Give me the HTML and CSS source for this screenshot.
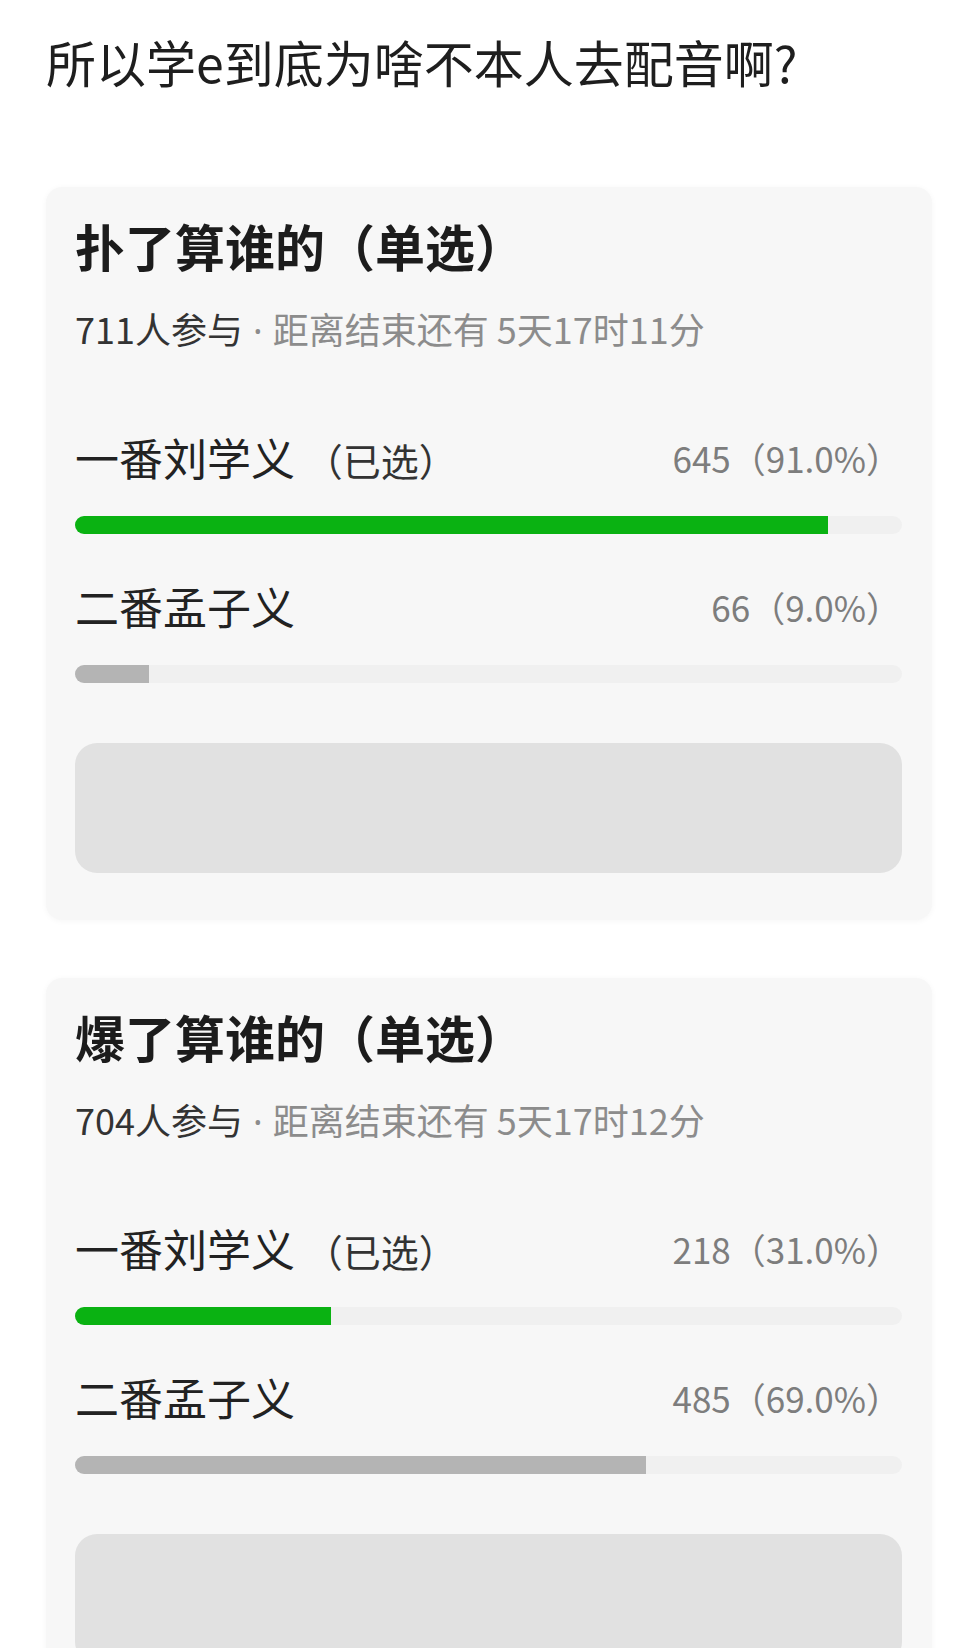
FILE: index.html
```html
<!DOCTYPE html>
<html lang="zh-CN">
<head>
  <meta charset="UTF-8">
  <meta name="viewport" content="width=device-width, initial-scale=1">
  <title>投票</title>
  <link rel="stylesheet" href="styles.css">
</head>
<body>

  <div class="page">
    <h1 class="title">所以学e到底为啥不本人去配音啊?</h1>

    <div class="poll">
      <h2 class="poll-name">扑了算谁的（单选）</h2>
      <p class="meta"><span class="count">711人参与</span> <span class="dot">·</span> 距离结束还有 5天17时11分</p>

      <div class="option">
        <div class="option-head">
          <span class="label">一番刘学义 <span class="picked">（已选）</span></span>
          <span class="num">645（91.0%）</span>
        </div>
        <div class="track"><div class="fill green" style="width: 91%"></div></div>
      </div>

      <div class="option">
        <div class="option-head">
          <span class="label">二番孟子义</span>
          <span class="num">66（9.0%）</span>
        </div>
        <div class="track"><div class="fill grey" style="width: 9%"></div></div>
      </div>

      <div class="box"></div>
    </div>

    <div class="poll">
      <h2 class="poll-name">爆了算谁的（单选）</h2>
      <p class="meta"><span class="count">704人参与</span> <span class="dot">·</span> 距离结束还有 5天17时12分</p>

      <div class="option">
        <div class="option-head">
          <span class="label">一番刘学义 <span class="picked">（已选）</span></span>
          <span class="num">218（31.0%）</span>
        </div>
        <div class="track"><div class="fill green" style="width: 31%"></div></div>
      </div>

      <div class="option">
        <div class="option-head">
          <span class="label">二番孟子义</span>
          <span class="num">485（69.0%）</span>
        </div>
        <div class="track"><div class="fill grey" style="width: 69%"></div></div>
      </div>

      <div class="box"></div>
    </div>
  </div>

</body>
</html>
```
FILE: styles.css
```css
/* Basic Reset */
* { margin: 0; padding: 0; box-sizing: border-box; }
body {
  font-family: "Noto Sans CJK SC", "Noto Sans", sans-serif;
  background: #ffffff;
  color: #222;
}
.page {
  padding: 28px 42px 0 46px;
}
.title {
  font-size: 50px;
  font-weight: 400;
  line-height: 66px;
  color: #1e1e1e;
  white-space: nowrap;
}
.poll {
  margin-top: 93px;
  background: #f7f7f7;
  border-radius: 16px;
  box-shadow: 0 1px 6px rgba(0,0,0,0.04);
  padding: 28px 30px 47px 29px;
}
.poll + .poll {
  margin-top: 58px;
}
.poll-name {
  font-size: 50px;
  font-weight: 700;
  line-height: 60px;
  color: #1c1c1c;
}
.meta {
  margin-top: 31px;
  margin-bottom: 76px;
  font-size: 36px;
  line-height: 44px;
  color: #8c8c8c;
}
.meta .count {
  color: #333;
}
.meta .dot {
  font-family: "Noto Sans", sans-serif;
  margin: 0 2px;
}
.option + .option {
  margin-top: 44px;
}
.option-head {
  display: flex;
  justify-content: space-between;
  align-items: center;
  height: 56px;
  padding-right: 1px;
}
.label {
  font-size: 44px;
  color: #222;
}
.picked {
  font-size: 38px;
  color: #333;
}
.num {
  font-size: 35px;
  color: #7d7d7d;
}
.track {
  margin-top: 31px;
  height: 18px;
  border-radius: 9px;
  background: #f0f0f0;
  overflow: hidden;
}
.fill {
  height: 100%;
}
.fill.green {
  background: #0ab212;
}
.fill.grey {
  background: #b4b4b4;
}
.box {
  margin-top: 60px;
  height: 130px;
  border-radius: 22px;
  background: #e1e1e1;
}
```
